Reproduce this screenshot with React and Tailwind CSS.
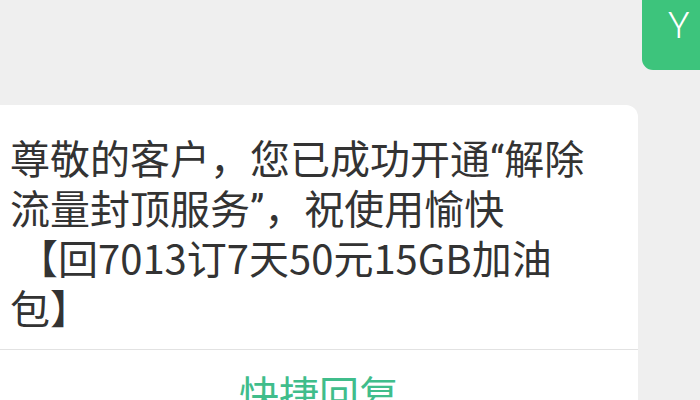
const Q = ({ children }) => (
  <span className="font-['Roboto',sans-serif]">{children}</span>
);

export default function App() {
  return (
    <div className="w-[700px] h-[400px] overflow-hidden bg-[#efefef] flex flex-col font-['Noto_Sans_CJK_SC',sans-serif]">
      {/* avatar bubble, cut off at the top right */}
      <div className="flex justify-end h-[105px] shrink-0">
        <div className="w-[58px] h-[70px] bg-[#3dc47c] rounded-bl-[11px] pl-[26px] pt-[6px]">
          <span className="text-white text-[36px] leading-[40px] font-light font-['Roboto',sans-serif]">Y</span>
        </div>
      </div>

      {/* sms card */}
      <div className="w-[638px] bg-white rounded-tr-[12px] flex-1 flex flex-col">
        <div className="pl-[10px] pt-[27px] pb-[17px] text-[40px] leading-[50px] text-[#333333] whitespace-nowrap">
          <div className="h-[50px]">尊敬的客户，您已成功开通<Q>“</Q>解除</div>
          <div className="h-[50px]">流量封顶服务<Q>”</Q>，祝使用愉快</div>
          <div className="h-[50px] pl-[8px]">
            <span className="font-['Noto_Sans_CJK_JP',sans-serif]">【</span>回7013订7天50元15GB加油
          </div>
          <div className="h-[50px]">包】</div>
        </div>
        <div className="h-px bg-[#e2e2e2]" />
        <div className="flex justify-center pt-[18px] text-[40px] leading-[50px] text-[#40bd8b]">
          快捷回复
        </div>
      </div>
    </div>
  );
}
